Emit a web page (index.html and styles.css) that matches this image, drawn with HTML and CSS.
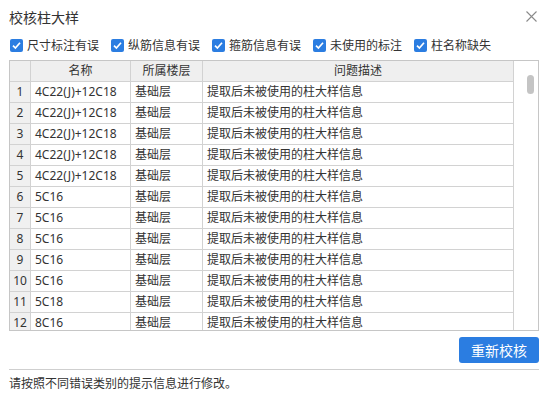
FILE: index.html
```html
<!DOCTYPE html>
<html lang="zh-CN">
<head>
<meta charset="utf-8">
<title>校核柱大样</title>
<link rel="stylesheet" href="styles.css">
</head>
<body>
<div class="dialog">
  <div class="titlebar">
    <span class="title">校核柱大样</span>
    <span class="close" aria-label="关闭">
      <svg width="11" height="11" viewBox="0 0 11 11"><path d="M0.5 0.5L10.5 10.5M10.5 0.5L0.5 10.5" stroke="#8a8a8a" stroke-width="1.1" fill="none"/></svg>
    </span>
  </div>
  <div class="filters">
    <label class="cb"><span class="box"><svg width="13" height="13" viewBox="0 0 13 13"><path d="M3 6.6L5.4 9L10 3.8" stroke="#fff" stroke-width="1.7" fill="none"/></svg></span>尺寸标注有误</label>
    <label class="cb"><span class="box"><svg width="13" height="13" viewBox="0 0 13 13"><path d="M3 6.6L5.4 9L10 3.8" stroke="#fff" stroke-width="1.7" fill="none"/></svg></span>纵筋信息有误</label>
    <label class="cb"><span class="box"><svg width="13" height="13" viewBox="0 0 13 13"><path d="M3 6.6L5.4 9L10 3.8" stroke="#fff" stroke-width="1.7" fill="none"/></svg></span>箍筋信息有误</label>
    <label class="cb"><span class="box"><svg width="13" height="13" viewBox="0 0 13 13"><path d="M3 6.6L5.4 9L10 3.8" stroke="#fff" stroke-width="1.7" fill="none"/></svg></span>未使用的标注</label>
    <label class="cb"><span class="box"><svg width="13" height="13" viewBox="0 0 13 13"><path d="M3 6.6L5.4 9L10 3.8" stroke="#fff" stroke-width="1.7" fill="none"/></svg></span>柱名称缺失</label>
  </div>
  <div class="grid-wrap">
    <div class="grid">
      <div class="row head">
        <div class="c num"></div>
        <div class="c name hc">名称</div>
        <div class="c floor hc">所属楼层</div>
        <div class="c desc hc">问题描述</div>
      </div>
      <div class="row"><div class="c num">1</div><div class="c name">4C22(J)+12C18</div><div class="c floor">基础层</div><div class="c desc">提取后未被使用的柱大样信息</div></div>
      <div class="row"><div class="c num">2</div><div class="c name">4C22(J)+12C18</div><div class="c floor">基础层</div><div class="c desc">提取后未被使用的柱大样信息</div></div>
      <div class="row"><div class="c num">3</div><div class="c name">4C22(J)+12C18</div><div class="c floor">基础层</div><div class="c desc">提取后未被使用的柱大样信息</div></div>
      <div class="row"><div class="c num">4</div><div class="c name">4C22(J)+12C18</div><div class="c floor">基础层</div><div class="c desc">提取后未被使用的柱大样信息</div></div>
      <div class="row"><div class="c num">5</div><div class="c name">4C22(J)+12C18</div><div class="c floor">基础层</div><div class="c desc">提取后未被使用的柱大样信息</div></div>
      <div class="row"><div class="c num">6</div><div class="c name">5C16</div><div class="c floor">基础层</div><div class="c desc">提取后未被使用的柱大样信息</div></div>
      <div class="row"><div class="c num">7</div><div class="c name">5C16</div><div class="c floor">基础层</div><div class="c desc">提取后未被使用的柱大样信息</div></div>
      <div class="row"><div class="c num">8</div><div class="c name">5C16</div><div class="c floor">基础层</div><div class="c desc">提取后未被使用的柱大样信息</div></div>
      <div class="row"><div class="c num">9</div><div class="c name">5C16</div><div class="c floor">基础层</div><div class="c desc">提取后未被使用的柱大样信息</div></div>
      <div class="row"><div class="c num">10</div><div class="c name">5C16</div><div class="c floor">基础层</div><div class="c desc">提取后未被使用的柱大样信息</div></div>
      <div class="row"><div class="c num">11</div><div class="c name">5C18</div><div class="c floor">基础层</div><div class="c desc">提取后未被使用的柱大样信息</div></div>
      <div class="row"><div class="c num">12</div><div class="c name">8C16</div><div class="c floor">基础层</div><div class="c desc">提取后未被使用的柱大样信息</div></div>
    </div>
    <div class="scrollbar"><div class="thumb"></div></div>
  </div>
  <div class="actions">
    <button class="btn">重新校核</button>
  </div>
  <div class="footer">请按照不同错误类别的提示信息进行修改。</div>
</div>
</body>
</html>
```

FILE: styles.css
```css
html, body {
  margin: 0;
  padding: 0;
  background: #fff;
}
body {
  width: 550px;
  height: 406px;
  overflow: hidden;
  font-family: "Noto Sans", "Noto Sans CJK SC", sans-serif;
  font-size: 12px;
  color: #333;
}
.dialog {
  display: flex;
  flex-direction: column;
  width: 550px;
  height: 406px;
}
.titlebar {
  height: 35px;
  display: flex;
  align-items: center;
  justify-content: space-between;
  padding: 0 13px 0 9px;
}
.title {
  font-size: 14px;
  line-height: 20px;
  color: #333;
}
.close {
  display: flex;
  width: 11px;
  height: 11px;
  margin-top: -2px;
}
.filters {
  height: 21px;
  display: flex;
  align-items: center;
  padding-left: 10px;
  gap: 12px;
}
.cb {
  display: flex;
  align-items: center;
  line-height: 16px;
  color: #333;
}
.box {
  width: 13px;
  height: 13px;
  border-radius: 2px;
  background: #2b7de1;
  margin-right: 4px;
  display: flex;
}
.grid-wrap {
  margin: 4px 0 0 9px;
  width: 528px;
  height: 269px;
  border: 1px solid #c6c6c6;
  display: flex;
  overflow: hidden;
  position: relative;
}
.grid {
  width: 504px;
  overflow: hidden;
}
.row {
  display: grid;
  grid-template-columns: 21px 100px 72px 311px;
  height: 21px;
}
.c {
  box-sizing: border-box;
  height: 21px;
  border-right: 1px solid #d2d2d2;
  border-bottom: 1px solid #d2d2d2;
  line-height: 20px;
  padding-left: 4px;
  white-space: nowrap;
  overflow: hidden;
}
.num {
  background: #f0f0f0;
  padding-left: 0;
  text-align: center;
}
.head .c {
  background: #efefef;
  text-align: center;
  padding-left: 0;
}
.scrollbar {
  width: 24px;
  position: relative;
}
.thumb {
  position: absolute;
  left: 13px;
  top: 14px;
  width: 7px;
  height: 19px;
  border-radius: 4px;
  background: #c4c4c4;
}
.actions {
  display: flex;
  justify-content: flex-end;
  width: 530px;
  margin: 6px 0 0 9px;
}
.btn {
  width: 80px;
  height: 26px;
  border: none;
  border-radius: 3px;
  background: #2b7de1;
  color: #fff;
  font-family: "Noto Sans CJK SC", sans-serif;
  font-size: 14px;
  padding: 0;
  line-height: 26px;
}
.footer {
  margin: 6px 0 0 9px;
  width: 530px;
  border-top: 1px solid #cfcfcf;
  height: 27px;
  line-height: 27px;
  color: #333;
}
```
